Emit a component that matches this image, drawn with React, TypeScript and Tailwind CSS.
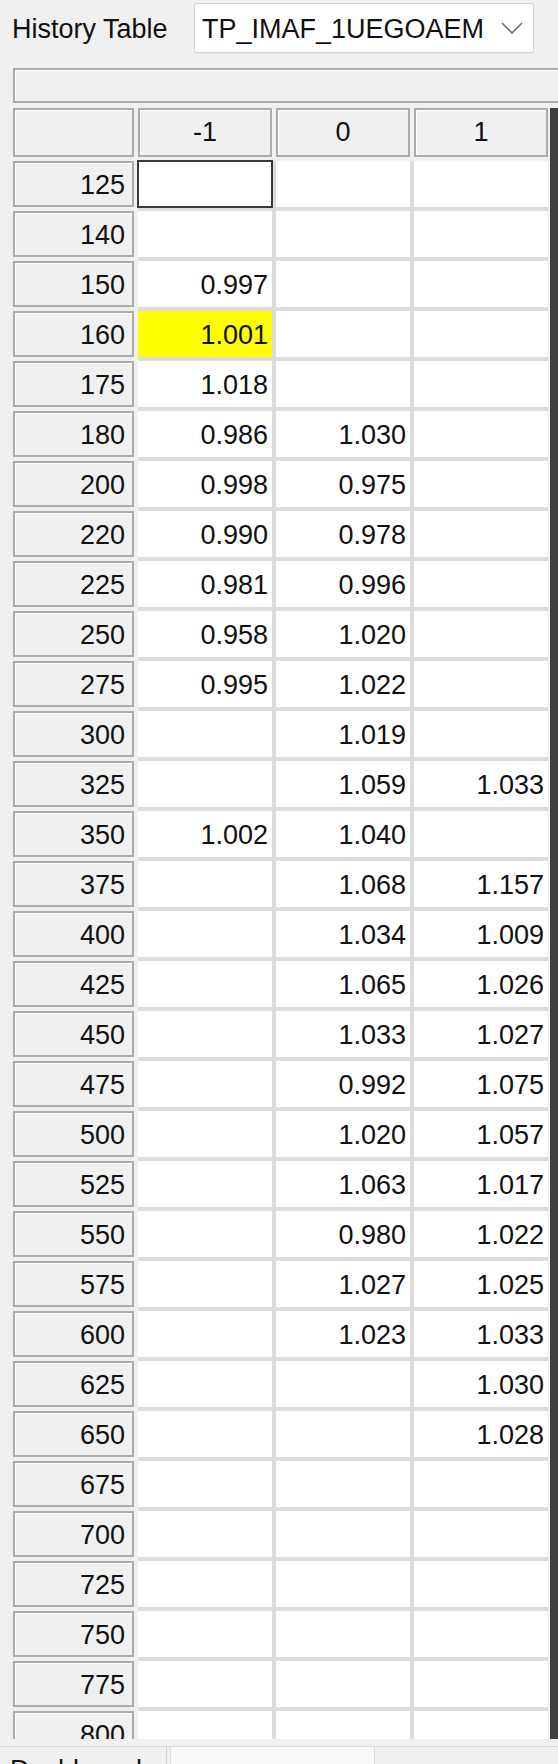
import React from 'react'

type Row = { key: string; values: (string | null)[] }

const rows: Row[] = [
  { key: '125', values: [null, null, null] },
  { key: '140', values: [null, null, null] },
  { key: '150', values: ['0.997', null, null] },
  { key: '160', values: ['1.001', null, null] },
  { key: '175', values: ['1.018', null, null] },
  { key: '180', values: ['0.986', '1.030', null] },
  { key: '200', values: ['0.998', '0.975', null] },
  { key: '220', values: ['0.990', '0.978', null] },
  { key: '225', values: ['0.981', '0.996', null] },
  { key: '250', values: ['0.958', '1.020', null] },
  { key: '275', values: ['0.995', '1.022', null] },
  { key: '300', values: [null, '1.019', null] },
  { key: '325', values: [null, '1.059', '1.033'] },
  { key: '350', values: ['1.002', '1.040', null] },
  { key: '375', values: [null, '1.068', '1.157'] },
  { key: '400', values: [null, '1.034', '1.009'] },
  { key: '425', values: [null, '1.065', '1.026'] },
  { key: '450', values: [null, '1.033', '1.027'] },
  { key: '475', values: [null, '0.992', '1.075'] },
  { key: '500', values: [null, '1.020', '1.057'] },
  { key: '525', values: [null, '1.063', '1.017'] },
  { key: '550', values: [null, '0.980', '1.022'] },
  { key: '575', values: [null, '1.027', '1.025'] },
  { key: '600', values: [null, '1.023', '1.033'] },
  { key: '625', values: [null, null, '1.030'] },
  { key: '650', values: [null, null, '1.028'] },
  { key: '675', values: [null, null, null] },
  { key: '700', values: [null, null, null] },
  { key: '725', values: [null, null, null] },
  { key: '750', values: [null, null, null] },
  { key: '775', values: [null, null, null] },
  { key: '800', values: [null, null, null] },
]

const columns = ['-1', '0', '1']

const headerBox =
  'border-2 border-[#ababab] bg-[#f0f0f0] shadow-[inset_1px_1px_0_#ffffff] flex items-center'

export default function App() {
  return (
    <div
      className="relative w-[558px] h-[1764px] overflow-hidden bg-[#f0f0f0] text-[27px] leading-none text-[#111]"
      style={{ fontFamily: '"Liberation Sans", Arial, sans-serif' }}
    >
      {/* top: label + combobox */}
      <div className="flex items-start pt-[3px] pl-[12px] h-[54px]">
        <span className="mt-[13px] w-[182px] whitespace-nowrap">History Table</span>
        <div className="flex items-center w-[340px] h-[50px] rounded-[3px] border border-[#d4d4d4] bg-white pl-[7px] pr-[10px] shadow-[0_1px_1px_rgba(0,0,0,0.06)]">
          <span className="flex-1 whitespace-nowrap pt-[2px]">TP_IMAF_1UEGOAEM</span>
          <svg width="22" height="12" viewBox="0 0 22 12" fill="none" stroke="#6e6e6e" strokeWidth="1.6">
            <path d="M1 1 L11 11 L21 1" />
          </svg>
        </div>
      </div>

      {/* empty bar */}
      <div className="ml-[13px] mt-[14px] h-[35px] w-[560px] border-2 border-[#ababab] bg-[#f0f0f0] shadow-[inset_1px_1px_0_#ffffff]" />

      {/* table */}
      <div className="flex mt-[5px] h-[1631px] overflow-hidden">
        <div className="flex flex-col pl-[13px] w-[550px]">
          <div className="flex shrink-0 gap-1 h-[49px]">
            <div className={`${headerBox} w-[121px]`} />
            {columns.map((c) => (
              <div key={c} className={`${headerBox} w-[134px] justify-center`}>
                {c}
              </div>
            ))}
          </div>
          <div className="flex shrink-0 gap-1 mt-1">
            <div className="flex flex-col gap-1 w-[121px]">
              {rows.map((r) => (
                <div key={r.key} className={`${headerBox} shrink-0 h-[46px] justify-end pr-[7px] pt-[2px]`}>
                  {r.key}
                </div>
              ))}
            </div>
            <div className="grid grid-cols-[134px_134px_134px] auto-rows-[46px] gap-1 bg-[#dcdcdc] self-start">
              {rows.map((r, ri) =>
                r.values.map((v, ci) => {
                  const selected = ri === 0 && ci === 0
                  const yellow = ri === 3 && ci === 0
                  return (
                    <div
                      key={`${r.key}-${ci}`}
                      className={`flex items-center justify-end pr-[4px] pt-[2px] ${
                        yellow ? 'bg-[#ffff00]' : 'bg-white'
                      } ${selected ? 'outline-2 -outline-offset-1 outline-[#3a3a3a]' : ''}`}
                    >
                      {v}
                    </div>
                  )
                })
              )}
            </div>
          </div>
        </div>
        <div className="w-[8px] bg-[#404040] mt-[-1px]" />
      </div>

      {/* bottom tab strip */}
      <div className="mt-[7px] flex h-[18px] border-t border-[#dadada]">
        <div className="w-[167px] border-r border-[#d0d0d0] bg-[#f0f0f0] pl-[10px] pt-[10px] overflow-hidden whitespace-nowrap">
          Dashboard
        </div>
        <div className="ml-[3px] w-[205px] border-x border-[#dcdcdc] bg-[#f9f9f9]" />
        <div className="flex-1" />
      </div>
    </div>
  )
}
